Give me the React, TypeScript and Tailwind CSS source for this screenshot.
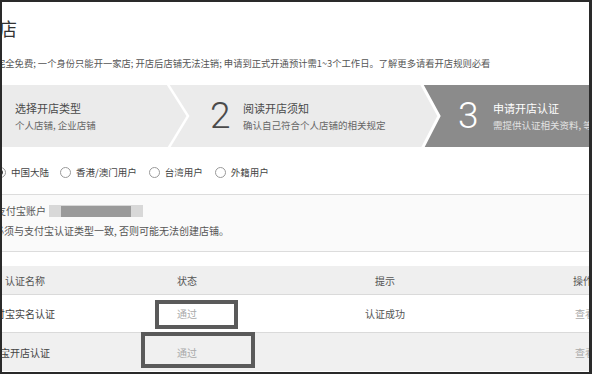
import React from "react";

const F = { fontFamily: '"Noto Sans CJK SC", "Noto Sans", sans-serif' };

function Radio({ checked }: { checked?: boolean }) {
  return (
    <span className="w-[11px] h-[11px] rounded-full border border-[#999] bg-white flex items-center justify-center shrink-0">
      {checked && <span className="w-[5px] h-[5px] rounded-full bg-[#444]" />}
    </span>
  );
}

export default function App() {
  return (
    <div
      className="w-[592px] h-[374px] overflow-hidden bg-white border-t-2 border-l-2 border-r-[3px] border-b-2 border-[#2a2a2a] flex flex-col text-[#444]"
      style={F}
    >
      {/* title */}
      <div className="pt-[16px] h-[38px] text-[18px] leading-[20px] text-[#333] whitespace-nowrap">
        <span className="ml-[-21px]">开店</span>
      </div>
      {/* notice */}
      <div className="mt-[16px] text-[9.3px] leading-[14px] text-[#555] whitespace-nowrap">
        <span className="ml-[-6px] inline-block">
          完全免费; 一个身份只能开一家店; 开店后店铺无法注销; 申请到正式开通预计需1~3个工作日。了解更多请看开店规则必看
        </span>
      </div>
      {/* steps */}
      <div className="mt-[15px] h-[62px] relative flex bg-[#ebebeb] shrink-0">
        <svg className="absolute inset-0" width="587" height="62" viewBox="0 0 587 62">
          <polyline points="165,-2 186,31 166,64" fill="none" stroke="#ffffff" strokeWidth="2.5" />
          <polygon points="420,0 587,0 587,62 421,62 438,31" fill="#8b8b8b" />
          <polyline points="419,-2 437,31 420,64" fill="none" stroke="#ffffff" strokeWidth="3" />
        </svg>
        <div className="relative w-[165px] pl-[13px] flex flex-col justify-center">
          <div className="text-[11px] leading-[15px] text-[#4a4a4a]">选择开店类型</div>
          <div className="mt-[3px] text-[9.5px] leading-[13px] text-[#666]">个人店铺, 企业店铺</div>
        </div>
        <div className="relative w-[255px] pl-[43px] flex items-center">
          <div className="text-[37px] leading-[40px] text-[#4a4a4a] font-light w-[20px]" style={{ fontFamily: "Roboto, sans-serif" }}>
            2
          </div>
          <div className="ml-[13px] flex flex-col">
            <div className="text-[11px] leading-[15px] text-[#4a4a4a]">阅读开店须知</div>
            <div className="mt-[3px] text-[9.5px] leading-[13px] text-[#666] whitespace-nowrap">确认自己符合个人店铺的相关规定</div>
          </div>
        </div>
        <div className="relative flex-1 pl-[36px] flex items-center overflow-hidden">
          <div className="text-[37px] leading-[40px] text-white font-light w-[20px]" style={{ fontFamily: "Roboto, sans-serif" }}>
            3
          </div>
          <div className="ml-[15px] flex flex-col whitespace-nowrap">
            <div className="text-[11px] leading-[15px] text-white">申请开店认证</div>
            <div className="mt-[3px] text-[9.5px] leading-[13px] text-[#e2e2e2]">需提供认证相关资料, 等待审核通过</div>
          </div>
        </div>
      </div>
      {/* radios */}
      <div className="h-[47px] pt-[3px] flex items-center text-[9.5px] text-[#444] whitespace-nowrap shrink-0">
        <div className="ml-[-7px] flex items-center gap-[5px]">
          <Radio checked />
          <span>中国大陆</span>
        </div>
        <div className="ml-[11px] flex items-center gap-[5px]">
          <Radio />
          <span>香港/澳门用户</span>
        </div>
        <div className="ml-[12px] flex items-center gap-[5px]">
          <Radio />
          <span>台湾用户</span>
        </div>
        <div className="ml-[12px] flex items-center gap-[5px]">
          <Radio />
          <span>外籍用户</span>
        </div>
      </div>
      {/* account section */}
      <div className="h-[58px] border-t border-b border-[#dcdcdc] bg-[#fafafa] pt-[9px] text-[10px] text-[#555] whitespace-nowrap shrink-0">
        <div className="h-[14px] flex items-center">
          <span className="ml-[-6px] leading-[14px]">支付宝账户</span>
          <span className="ml-[3px] w-[94px] h-[12px] bg-[#d8d8d8] flex items-center pl-[12px]">
            <span className="w-[70px] h-[11px] bg-[#9a9a9a]" />
          </span>
        </div>
        <div className="mt-[6px] leading-[14px]">
          <span className="ml-[-8px]">必须与支付宝认证类型一致, 否则可能无法创建店铺。</span>
        </div>
      </div>
      {/* white strip */}
      <div className="h-[14px] shrink-0" />
      {/* table */}
      <div className="relative text-[10px] whitespace-nowrap flex-1">
        <div className="h-[29px] grid grid-cols-[118px_134px_262px_1fr] items-center bg-[#efefef] border-b border-[#dadada] text-[#555]">
          <div className="pl-[3px]">认证名称</div>
          <div className="text-center">状态</div>
          <div className="text-center">提示</div>
          <div className="pl-[57px]">操作</div>
        </div>
        <div className="h-[38px] grid grid-cols-[118px_134px_262px_1fr] items-center bg-white border-b border-[#dadada]">
          <div className="ml-[-17px] text-[#444]">支付宝实名认证</div>
          <div className="text-center text-[#aaa]">通过</div>
          <div className="text-center text-[#555]">认证成功</div>
          <div className="pl-[59px] text-[#aaa]">查看</div>
        </div>
        <div className="h-[38px] grid grid-cols-[118px_134px_262px_1fr] items-center bg-[#f0f0f0]">
          <div className="ml-[-12px] text-[#444]">淘宝开店认证</div>
          <div className="text-center text-[#aaa]">通过</div>
          <div />
          <div className="pl-[59px] text-[#aaa]">查看</div>
        </div>
        {/* annotation boxes */}
        <div className="absolute left-[153px] top-[34px] w-[83px] h-[29px] border-4 border-[#5a5a5a]" />
        <div className="absolute left-[139px] top-[66px] w-[114px] h-[36px] border-4 border-[#5a5a5a]" />
      </div>
    </div>
  );
}
